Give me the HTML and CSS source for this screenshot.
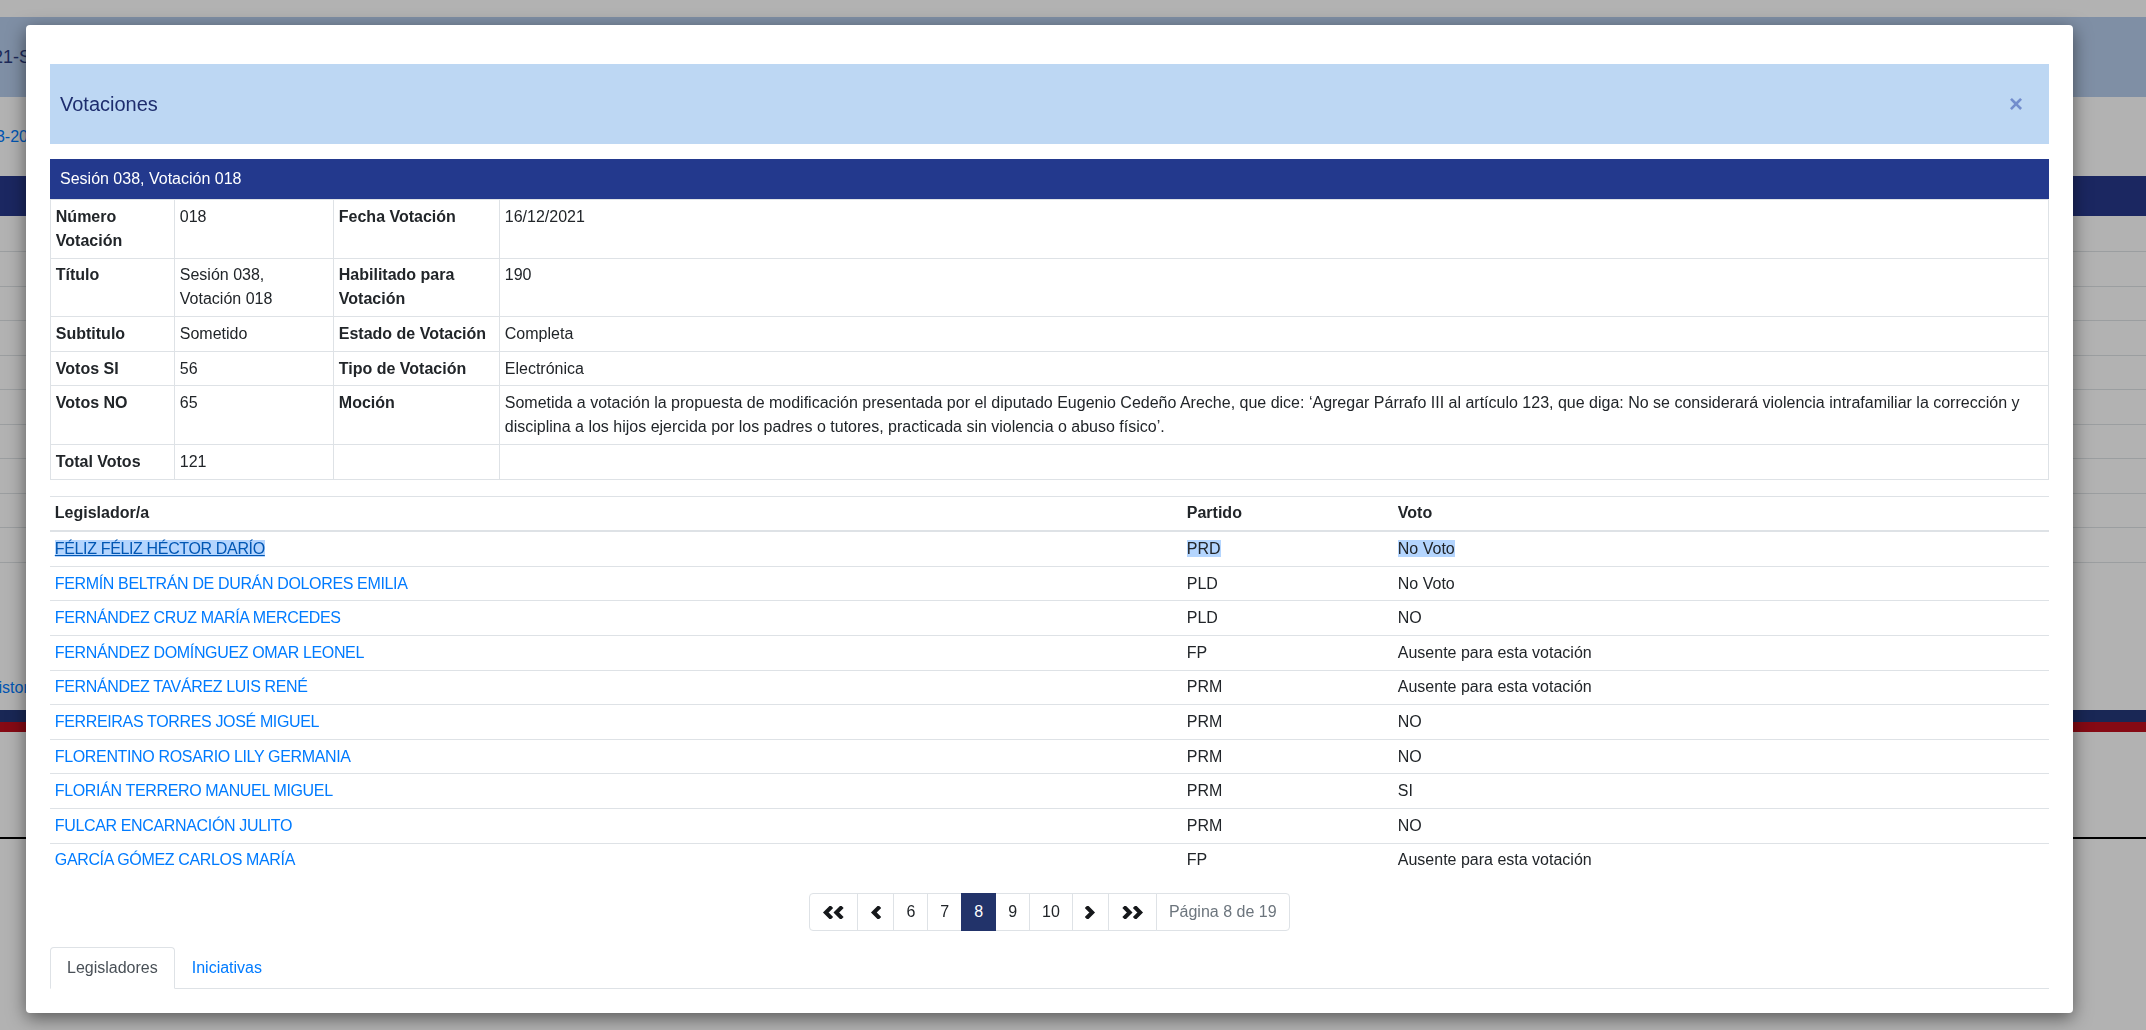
FILE: index.html
```html
<!DOCTYPE html>
<html lang="es">
<head>
    <meta charset="UTF-8">
    <meta name="viewport" content="width=device-width, initial-scale=1.0">
    <title>Votaciones</title>
    <link rel="stylesheet" href="styles.css">
</head>
<body>
    <!-- page behind the dialog -->
    <div class="page">
        <div class="page-top"></div>
        <div class="page-head">
            <h2 class="page-title">2021-SO</h2>
        </div>
        <div class="page-sub">
            <a href="#">03-2021</a>
        </div>
        <div class="page-bar"></div>
        <div class="page-rows">
            <div class="page-row"></div>
            <div class="page-row"></div>
            <div class="page-row"></div>
            <div class="page-row"></div>
            <div class="page-row"></div>
            <div class="page-row"></div>
            <div class="page-row"></div>
            <div class="page-row"></div>
            <div class="page-row"></div>
            <div class="page-row"></div>
        </div>
        <div class="page-more"><a href="#">Historial</a></div>
        <div class="stripe-navy"></div>
        <div class="stripe-red"></div>
        <div class="page-line"></div>
    </div>

    <div class="backdrop"></div>

    <div class="modal">
        <div class="modal-head">
            <h5 class="modal-title">Votaciones</h5>
            <button class="close">&times;</button>
        </div>

        <div class="vote-bar">Sesión 038, Votación 018</div>
        <table class="details">
            <colgroup>
                <col class="col-lbl1">
                <col class="col-val1">
                <col class="col-lbl2">
                <col>
            </colgroup>
            <tr>
                <td class="lbl">Número Votación</td>
                <td>018</td>
                <td class="lbl">Fecha Votación</td>
                <td>16/12/2021</td>
            </tr>
            <tr>
                <td class="lbl">Título</td>
                <td>Sesión 038, Votación 018</td>
                <td class="lbl">Habilitado para Votación</td>
                <td>190</td>
            </tr>
            <tr>
                <td class="lbl">Subtitulo</td>
                <td>Sometido</td>
                <td class="lbl">Estado de Votación</td>
                <td>Completa</td>
            </tr>
            <tr>
                <td class="lbl">Votos SI</td>
                <td>56</td>
                <td class="lbl">Tipo de Votación</td>
                <td>Electrónica</td>
            </tr>
            <tr>
                <td class="lbl">Votos NO</td>
                <td>65</td>
                <td class="lbl">Moción</td>
                <td>Sometida a votación la propuesta de modificación presentada por el diputado Eugenio Cedeño Areche, que dice: ‘Agregar Párrafo III al artículo 123, que diga: No se considerará violencia intrafamiliar la corrección y disciplina a los hijos ejercida por los padres o tutores, practicada sin violencia o abuso físico’.</td>
            </tr>
            <tr>
                <td class="lbl">Total Votos</td>
                <td>121</td>
                <td></td>
                <td></td>
            </tr>
        </table>

        <table class="legis">
            <colgroup>
                <col class="col-name">
                <col class="col-party">
                <col>
            </colgroup>
            <thead>
                <tr>
                    <th>Legislador/a</th>
                    <th>Partido</th>
                    <th>Voto</th>
                </tr>
            </thead>
            <tbody>
                <tr>
                    <td><a href="#" class="name sel hover">FÉLIZ FÉLIZ HÉCTOR DARÍO</a></td>
                    <td><span class="sel">PRD</span></td>
                    <td><span class="sel">No Voto</span></td>
                </tr>
                <tr>
                    <td><a href="#" class="name">FERMÍN BELTRÁN DE DURÁN DOLORES EMILIA</a></td>
                    <td>PLD</td>
                    <td>No Voto</td>
                </tr>
                <tr>
                    <td><a href="#" class="name">FERNÁNDEZ CRUZ MARÍA MERCEDES</a></td>
                    <td>PLD</td>
                    <td>NO</td>
                </tr>
                <tr>
                    <td><a href="#" class="name">FERNÁNDEZ DOMÍNGUEZ OMAR LEONEL</a></td>
                    <td>FP</td>
                    <td>Ausente para esta votación</td>
                </tr>
                <tr>
                    <td><a href="#" class="name">FERNÁNDEZ TAVÁREZ LUIS RENÉ</a></td>
                    <td>PRM</td>
                    <td>Ausente para esta votación</td>
                </tr>
                <tr>
                    <td><a href="#" class="name">FERREIRAS TORRES JOSÉ MIGUEL</a></td>
                    <td>PRM</td>
                    <td>NO</td>
                </tr>
                <tr>
                    <td><a href="#" class="name">FLORENTINO ROSARIO LILY GERMANIA</a></td>
                    <td>PRM</td>
                    <td>NO</td>
                </tr>
                <tr>
                    <td><a href="#" class="name">FLORIÁN TERRERO MANUEL MIGUEL</a></td>
                    <td>PRM</td>
                    <td>SI</td>
                </tr>
                <tr>
                    <td><a href="#" class="name">FULCAR ENCARNACIÓN JULITO</a></td>
                    <td>PRM</td>
                    <td>NO</td>
                </tr>
                <tr>
                    <td><a href="#" class="name">GARCÍA GÓMEZ CARLOS MARÍA</a></td>
                    <td>FP</td>
                    <td>Ausente para esta votación</td>
                </tr>
            </tbody>
        </table>

        <nav class="pager-wrap">
            <ul class="pager">
                <li><a href="#" class="page-link">
                    <svg width="23" height="13" viewBox="0 0 23 13"><polyline points="8.3,2 3.8,6.5 8.3,11" /><polyline points="18.8,2 14.3,6.5 18.8,11" /></svg>
                </a></li>
                <li><a href="#" class="page-link">
                    <svg width="11" height="13" viewBox="0 0 11 13"><polyline points="8.3,2 3.8,6.5 8.3,11" /></svg>
                </a></li>
                <li><a href="#" class="page-link">6</a></li>
                <li><a href="#" class="page-link">7</a></li>
                <li><a href="#" class="page-link active">8</a></li>
                <li><a href="#" class="page-link">9</a></li>
                <li><a href="#" class="page-link">10</a></li>
                <li><a href="#" class="page-link">
                    <svg width="11" height="13" viewBox="0 0 11 13"><polyline points="2.7,2 7.2,6.5 2.7,11" /></svg>
                </a></li>
                <li><a href="#" class="page-link">
                    <svg width="23" height="13" viewBox="0 0 23 13"><polyline points="4.2,2 8.7,6.5 4.2,11" /><polyline points="14.7,2 19.2,6.5 14.7,11" /></svg>
                </a></li>
                <li><span class="page-link info">Página 8 de 19</span></li>
            </ul>
        </nav>

        <ul class="tabs">
            <li><a href="#" class="tab active">Legisladores</a></li>
            <li><a href="#" class="tab">Iniciativas</a></li>
        </ul>
    </div>
</body>
</html>
```

FILE: styles.css
```css
html, body {
    margin: 0;
    padding: 0;
}

body {
    font-family: "Liberation Sans", Arial, sans-serif;
    font-size: 16px;
    line-height: 1.5;
    color: #212529;
    background-color: #fff;
    overflow: hidden;
}

a {
    color: #007bff;
    text-decoration: none;
}

/* ---- page behind the dialog ---- */
.page {
    min-height: 1030px;
}

.page-top {
    height: 17px;
}

.page-head {
    height: 80px;
    background-color: #b6cdec;
    display: flex;
    align-items: center;
}

.page-title {
    margin: 0 0 0 -27px;
    font-size: 18px;
    font-weight: normal;
    color: #2b3c80;
}

.page-sub {
    height: 79px;
    display: flex;
    align-items: center;
    margin-left: -13px;
}

.page-bar {
    height: 40px;
    background-color: #27398b;
}

.page-rows {
    padding-top: 1.5px;
}

.page-row {
    height: 33.5px;
    border-bottom: 1px solid #dee2e6;
}

.page-more {
    padding-top: 113px;
    margin-left: -13px;
}

.stripe-navy {
    margin-top: 10px;
    height: 12px;
    background-color: #25387a;
}

.stripe-red {
    height: 10px;
    background-color: #c10f1d;
}

.page-line {
    margin-top: 105px;
    height: 2px;
    background-color: #000;
}

.backdrop {
    position: fixed;
    top: 0;
    left: 0;
    right: 0;
    bottom: 0;
    background-color: rgba(0, 0, 0, 0.3);
}

/* ---- dialog ---- */
.modal {
    position: absolute;
    top: 25px;
    left: 26px;
    width: 2047px;
    box-sizing: border-box;
    padding: 39px 24px 24px;
    background-color: #fff;
    border-radius: 4px;
    box-shadow: 0 5px 18px rgba(0, 0, 0, 0.5);
}

.modal-head {
    height: 80px;
    padding: 0 10px;
    background-color: #bdd7f3;
    display: flex;
    align-items: center;
    justify-content: space-between;
    margin-bottom: 15px;
}

.modal-title {
    margin: 0;
    font-size: 20px;
    font-weight: normal;
    line-height: 1.2;
    color: #1e2d6e;
}

.close {
    margin-right: 16px;
    padding: 0;
    border: none;
    background: none;
    font-family: "Liberation Sans", Arial, sans-serif;
    font-size: 24px;
    font-weight: bold;
    line-height: 1;
    color: #2a45a8;
    opacity: 0.5;
    cursor: pointer;
}

.vote-bar {
    height: 40px;
    box-sizing: border-box;
    padding: 8px 10px;
    background-color: #23398d;
    color: #fff;
}

.details,
.legis {
    width: 100%;
    border-collapse: collapse;
    table-layout: fixed;
    margin-bottom: 16px;
}

.details td {
    border: 1px solid #dee2e6;
    padding: 4.8px;
    vertical-align: top;
}

.details .lbl {
    font-weight: bold;
}

.col-lbl1 { width: 124px; }
.col-val1 { width: 159px; }
.col-lbl2 { width: 166px; }

.legis th,
.legis td {
    padding: 4.8px;
    text-align: left;
    vertical-align: top;
    border-top: 1px solid #dee2e6;
}

.legis thead th {
    border-bottom: 2px solid #dee2e6;
}

.col-name { width: 1132px; }
.col-party { width: 211px; }

.name {
    letter-spacing: -0.35px;
}

.sel {
    background-color: #b4d5fe;
}

.hover {
    color: #0056b3;
    text-decoration: underline;
}

/* ---- pagination ---- */
.pager-wrap {
    display: flex;
    justify-content: center;
    margin-bottom: 16px;
}

.pager {
    display: flex;
    list-style: none;
    margin: 0;
    padding: 0;
}

.page-link {
    display: block;
    height: 20px;
    padding: 8px 12px;
    margin-left: -1px;
    line-height: 20px;
    color: #212529;
    background-color: #fff;
    border: 1px solid #dee2e6;
}

.pager li:first-child .page-link {
    margin-left: 0;
    border-radius: 4px 0 0 4px;
}

.pager li:last-child .page-link {
    border-radius: 0 4px 4px 0;
}

.page-link svg {
    display: block;
    margin-top: 3.5px;
    fill: none;
    stroke: #16181b;
    stroke-width: 4;
    stroke-linecap: square;
    stroke-linejoin: miter;
}

.page-link.active {
    position: relative;
    color: #fff;
    background-color: #22336a;
    border-color: #22336a;
}

.page-link.info {
    color: #6c757d;
}

/* ---- tabs ---- */
.tabs {
    display: flex;
    list-style: none;
    margin: 0;
    padding: 0;
    border-bottom: 1px solid #dee2e6;
}

.tab {
    display: block;
    padding: 8px 16px;
    margin-bottom: -1px;
    border: 1px solid transparent;
    border-radius: 4px 4px 0 0;
}

.tab.active {
    color: #495057;
    background-color: #fff;
    border-color: #dee2e6 #dee2e6 #fff;
}
```
